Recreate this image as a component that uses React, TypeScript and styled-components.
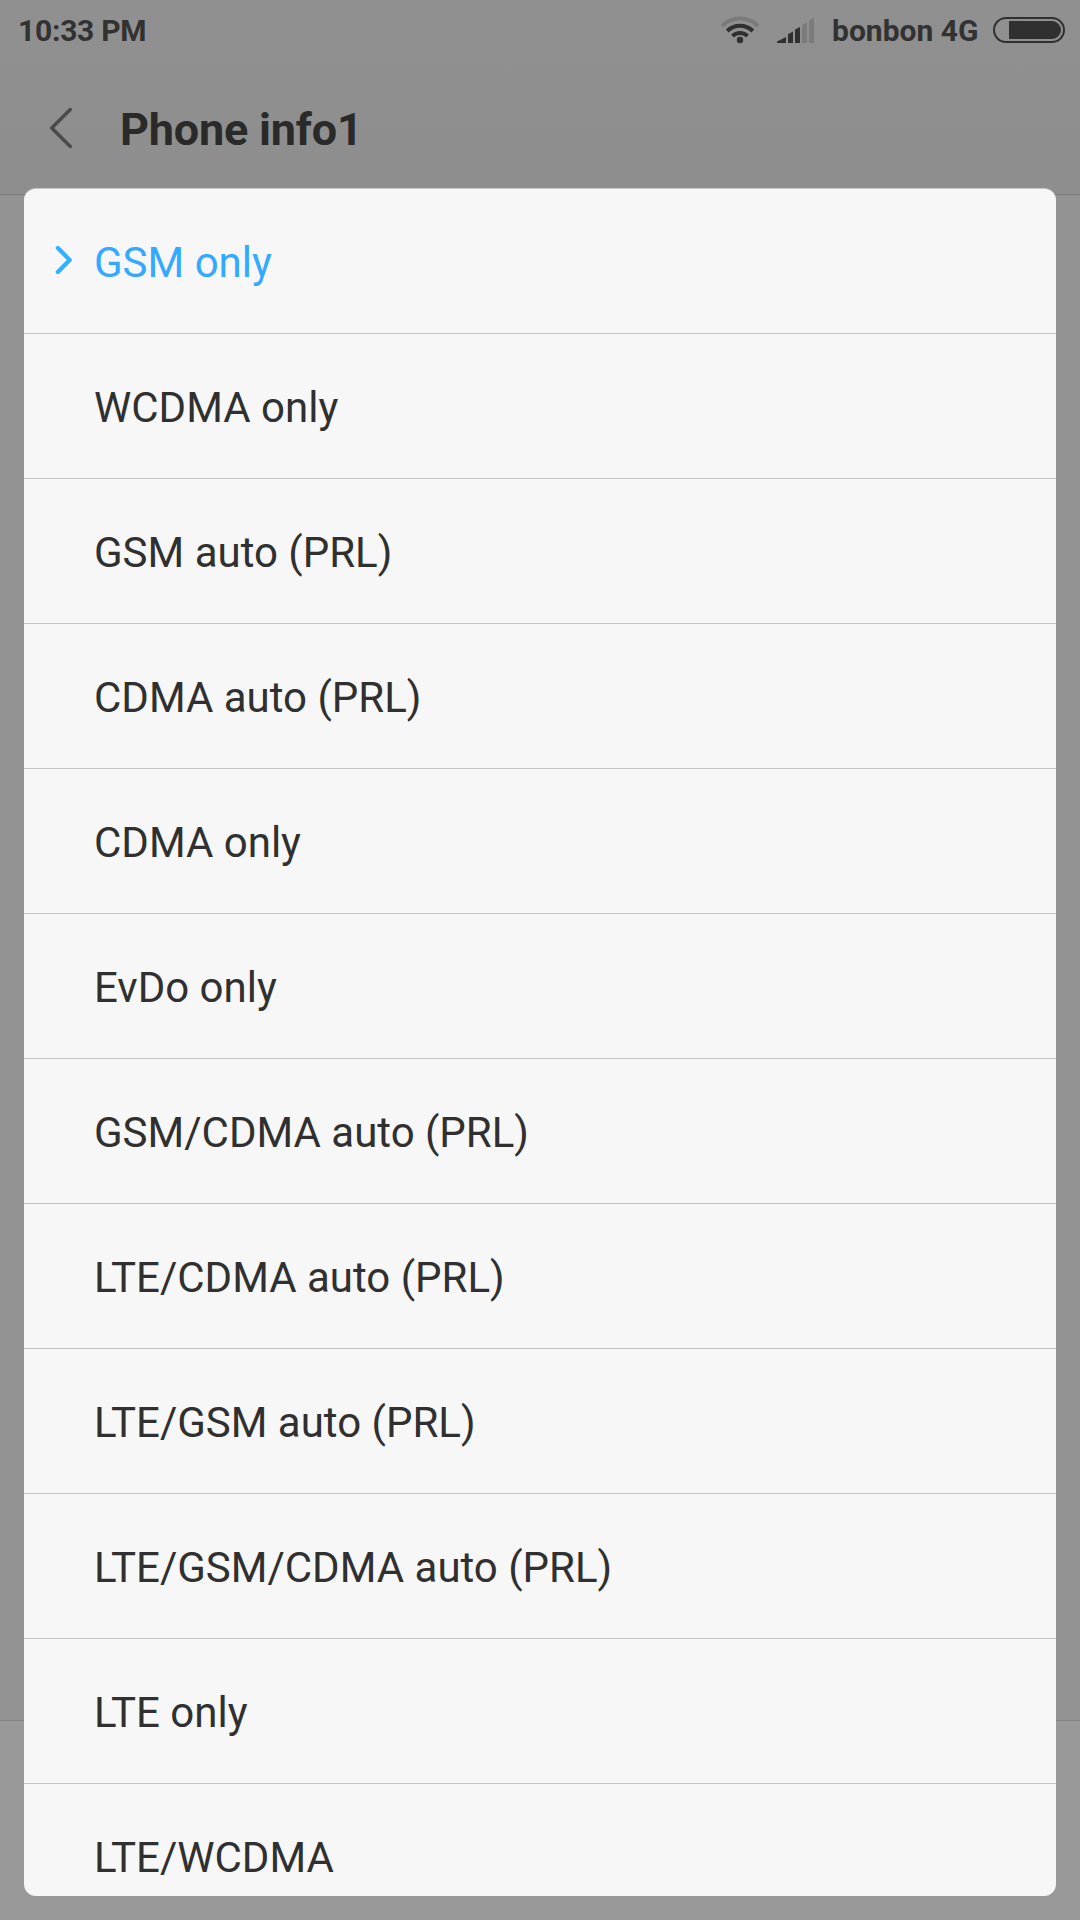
import React from 'react';
import styled, { createGlobalStyle } from 'styled-components';

const GlobalStyle = createGlobalStyle`
  * { box-sizing: border-box; }
  body {
    margin: 0;
    background: #999999;
    font-family: Roboto, "Liberation Sans", sans-serif;
  }
`;

const Screen = styled.div`
  position: relative;
  display: flex;
  flex-direction: column;
  width: 1080px;
  height: 1920px;
  overflow: hidden;
  background: #999999;
`;

const TopArea = styled.header`
  height: 195px;
  flex: none;
  background: linear-gradient(#909090, #8e8e8e);
  border-bottom: 1px solid #7b7b7b;
`;

const StatusBar = styled.div`
  display: flex;
  align-items: center;
  height: 60px;
  padding: 0 15px 0 18px;
  color: #323232;
  font-size: 30px;
  font-weight: 700;
  line-height: 60px;
  white-space: nowrap;
`;

const Clock = styled.span`
  flex: 1;
  padding-top: 2px;
  line-height: 58px;
  letter-spacing: -0.25px;
`;

const StatusIcons = styled.div`
  display: flex;
  align-items: center;
`;

const WifiIcon = styled.svg`
  width: 40px;
  height: 60px;
  margin-right: 17px;
`;

const SignalIcon = styled.svg`
  width: 40px;
  height: 60px;
  margin-right: 15px;
`;

const Carrier = styled.span`
  width: 146px;
  margin-right: 15px;
  padding-top: 2px;
  line-height: 58px;
`;

const BatteryIcon = styled.svg`
  width: 72px;
  height: 60px;
`;

const TitleBar = styled.div`
  display: flex;
  align-items: center;
  height: 134px;
  padding-left: 48px;
`;

const BackIcon = styled.svg`
  width: 26px;
  height: 42px;
  margin-right: 46px;
  margin-top: 2px;
`;

const Title = styled.h1`
  margin: 6px 0 0;
  color: #2a2a2a;
  font-size: 45px;
  font-weight: 700;
  line-height: 60px;
  letter-spacing: -0.2px;
`;

const PageBody = styled.div`
  height: 1526px;
  flex: none;
  background: #939393;
  border-bottom: 1px solid #818181;
`;

const Sheet = styled.ul`
  position: absolute;
  left: 24px;
  right: 24px;
  top: 188px;
  height: 1708px;
  margin: 0;
  padding: 0;
  overflow: hidden;
  list-style: none;
  background: #f7f7f7;
  border-top: 1px solid #c6c6c6;
  border-radius: 12px;
`;

const Option = styled.li<{ $selected?: boolean }>`
  display: flex;
  align-items: center;
  height: 145px;
  padding: 3px 0 0 31px;
  border-bottom: 1px solid #c4c4c4;
  color: ${(p) => (p.$selected ? '#33a9ff' : '#303030')};
  font-size: 42px;
  line-height: 50px;
  white-space: nowrap;
`;

const Marker = styled.span`
  flex: none;
  display: flex;
  width: 39px;
  margin-top: -6px;
`;

const modes = [
  'GSM only',
  'WCDMA only',
  'GSM auto (PRL)',
  'CDMA auto (PRL)',
  'CDMA only',
  'EvDo only',
  'GSM/CDMA auto (PRL)',
  'LTE/CDMA auto (PRL)',
  'LTE/GSM auto (PRL)',
  'LTE/GSM/CDMA auto (PRL)',
  'LTE only',
  'LTE/WCDMA',
];

export default function App() {
  return (
    <Screen>
      <GlobalStyle />
      <TopArea>
        <StatusBar>
          <Clock>10:33 PM</Clock>
          <StatusIcons>
            <WifiIcon viewBox="0 0 40 60" fill="none" strokeWidth="4">
              <path d="M2 26 A25.5 25.5 0 0 1 38 26" stroke="#7b7b7b" />
              <path d="M7.2 31 A18 18 0 0 1 32.8 31" stroke="#303030" />
              <path d="M12.5 36 A10.8 10.8 0 0 1 27.5 36" stroke="#303030" />
              <circle cx="20" cy="40" r="3.2" fill="#303030" />
            </WifiIcon>
            <SignalIcon viewBox="0 0 40 60">
              <path d="M0 43 V41.6 L9 37 V43 Z" fill="#303030" />
              <path d="M11 43 V34.2 L16 31.6 V43 Z" fill="#303030" />
              <path d="M18 43 V29.6 L23 27 V43 Z" fill="#303030" />
              <path d="M25 43 V25 L30 22.4 V43 Z" fill="#7b7b7b" />
              <path d="M32 43 V20.4 L37 17.8 V43 Z" fill="#7b7b7b" />
            </SignalIcon>
            <Carrier>bonbon 4G</Carrier>
            <BatteryIcon viewBox="0 0 72 60">
              <rect x="1" y="18" width="70" height="24" rx="12" fill="none" stroke="#303030" strokeWidth="2" />
              <path d="M16 21 H59 A9 9 0 0 1 59 39 H16 Z" fill="#303030" />
            </BatteryIcon>
          </StatusIcons>
        </StatusBar>
        <TitleBar>
          <BackIcon viewBox="0 0 26 42" fill="none" stroke="#4a4a4a" strokeWidth="3.5" strokeLinecap="round" strokeLinejoin="round">
            <path d="M22.3 2.5 L3.7 21 L22.3 39.5" />
          </BackIcon>
          <Title>Phone info1</Title>
        </TitleBar>
      </TopArea>
      <PageBody />
      <Sheet>
        {modes.map((mode, i) => (
          <Option key={mode} $selected={i === 0}>
            <Marker>
              {i === 0 && (
                <svg width="18" height="30" viewBox="0 0 18 30" fill="none" stroke="#33b0ff" strokeWidth="4.2" strokeLinecap="round" strokeLinejoin="round">
                  <path d="M2.9 3.1 L14.7 15 L2.9 26.9" />
                </svg>
              )}
            </Marker>
            {mode}
          </Option>
        ))}
      </Sheet>
    </Screen>
  );
}
